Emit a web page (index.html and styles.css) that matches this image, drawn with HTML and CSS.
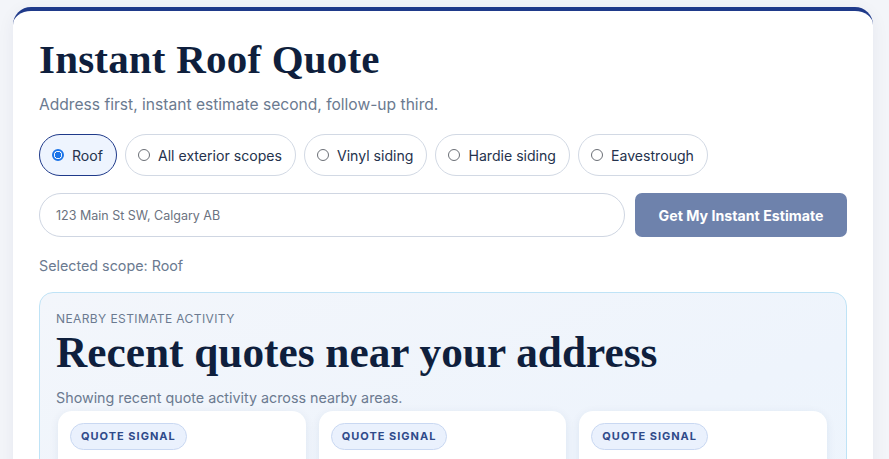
FILE: index.html
```html
<!DOCTYPE html>
<html lang="en">
<head>
<meta charset="utf-8">
<title>Instant Roof Quote</title>
<link rel="stylesheet" href="styles.css">
</head>
<body>
<main class="card">
  <h1 class="title">Instant Roof Quote</h1>
  <p class="subtitle">Address first, instant estimate second, follow-up third.</p>
  <div class="scopes">
    <label class="pill selected"><span class="radio on"></span>Roof</label>
    <label class="pill"><span class="radio"></span>All exterior scopes</label>
    <label class="pill"><span class="radio"></span>Vinyl siding</label>
    <label class="pill"><span class="radio"></span>Hardie siding</label>
    <label class="pill"><span class="radio"></span>Eavestrough</label>
  </div>
  <div class="address-row">
    <div class="address"><span class="placeholder">123 Main St SW, Calgary AB</span></div>
    <button class="cta">Get My Instant Estimate</button>
  </div>
  <p class="selected-scope">Selected scope: Roof</p>
  <section class="activity">
    <div class="eyebrow">NEARBY ESTIMATE ACTIVITY</div>
    <h2 class="activity-title">Recent quotes near your address</h2>
    <p class="activity-sub">Showing recent quote activity across nearby areas.</p>
    <div class="quotes">
      <div class="quote"><span class="badge">QUOTE SIGNAL</span></div>
      <div class="quote"><span class="badge">QUOTE SIGNAL</span></div>
      <div class="quote"><span class="badge">QUOTE SIGNAL</span></div>
    </div>
  </section>
</main>
</body>
</html>
```

FILE: styles.css
```css
html, body {
  margin: 0;
  height: 100%;
  overflow: hidden;
}
body {
  background: #f3f5f9;
  padding: 7px 16px 0 13px;
  font-family: Inter, "Noto Sans", sans-serif;
  color: #1f2a44;
  box-sizing: border-box;
}
.card {
  background: #ffffff;
  border-top: 4px solid #1f3a8a;
  border-radius: 18px 18px 0 0;
  padding: 24px 26px 40px 26px;
  box-shadow: 0 4px 18px rgba(20, 40, 80, 0.06);
  min-height: 600px;
}
.title {
  font-family: "Liberation Serif", "DejaVu Serif", serif;
  font-weight: 700;
  font-size: 41px;
  line-height: 48px;
  margin: 0;
  color: #0f1f3d;
  letter-spacing: 0.2px;
}
.subtitle {
  margin: 12px 0 0 0;
  font-size: 15.6px;
  line-height: 20px;
  color: #6b7a90;
}
.scopes {
  display: flex;
  gap: 8px;
  margin-top: 19px;
}
.pill {
  display: flex;
  align-items: center;
  gap: 8px;
  height: 42px;
  box-sizing: border-box;
  padding: 0 13px 0 12px;
  border: 1px solid #d2d9e4;
  border-radius: 21px;
  font-size: 14.1px;
  color: #25324d;
  background: #fff;
}
.pill.selected {
  background: #eef4fe;
  border-color: #1f3a8a;
}
.radio {
  width: 12px;
  height: 12px;
  box-sizing: border-box;
  border: 1px solid #6b6f76;
  border-radius: 50%;
  background: #fff;
}
.radio.on {
  border: 2px solid #1a73e8;
  background: radial-gradient(circle, #1a73e8 0 3px, #fff 3.5px);
}
.address-row {
  display: flex;
  gap: 10px;
  margin-top: 17px;
}
.address {
  flex: 1;
  height: 44px;
  box-sizing: border-box;
  border: 1px solid #cfd6e2;
  border-radius: 22px;
  display: flex;
  align-items: center;
  padding-left: 16px;
}
.placeholder {
  font-size: 12.5px;
  color: #6b7280;
}
.cta {
  width: 212px;
  height: 44px;
  border: 0;
  border-radius: 7px;
  background: #6e82ac;
  color: #ffffff;
  font-family: Inter, "Noto Sans", sans-serif;
  font-weight: 700;
  font-size: 14.2px;
}
.selected-scope {
  margin: 20px 0 0 0;
  font-size: 14.3px;
  line-height: 18px;
  color: #6b7a90;
}
.activity {
  margin-top: 17px;
  border: 1px solid #bfe3f6;
  border-radius: 14px;
  background: linear-gradient(160deg, #f3f6fb 0%, #eef4fc 60%, #edf5fd 100%);
  padding: 19px 17px 20px 16px;
}
.eyebrow {
  font-size: 12px;
  letter-spacing: 0.4px;
  color: #6b7a90;
  line-height: 14px;
}
.activity-title {
  font-family: "Liberation Serif", "DejaVu Serif", serif;
  font-weight: 700;
  font-size: 43.3px;
  line-height: 48px;
  margin: 2px 0 0 0;
  color: #0f1f3d;
}
.activity-sub {
  margin: 12px 0 0 0;
  font-size: 14.3px;
  line-height: 20px;
  color: #6b7a90;
}
.quotes {
  display: grid;
  grid-template-columns: repeat(3, 1fr);
  gap: 13px;
  margin-top: 3px;
  padding: 0 2px;
}
.quote {
  background: #ffffff;
  border-radius: 14px;
  padding: 12px 12px;
  height: 120px;
  box-shadow: 0 2px 10px rgba(30, 60, 120, 0.08);
}
.badge {
  display: inline-block;
  padding: 0 10px;
  height: 27px;
  line-height: 25px;
  box-sizing: border-box;
  border: 1px solid #c9d8f2;
  border-radius: 14px;
  background: #eaf1fd;
  color: #2f4a8a;
  font-size: 11px;
  font-weight: 700;
  letter-spacing: 1px;
}
```
